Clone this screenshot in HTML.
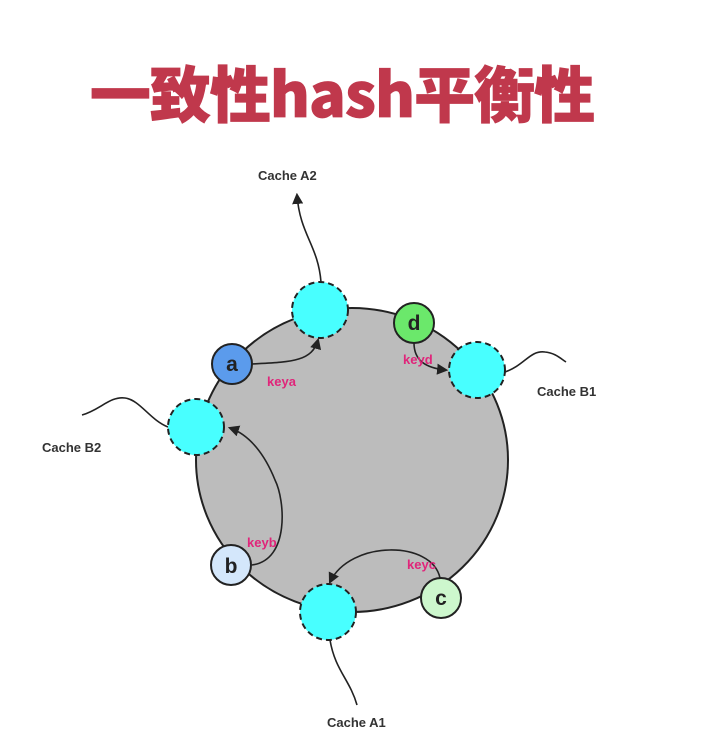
<!DOCTYPE html>
<html><head><meta charset="utf-8"><style>
body{margin:0;background:#fff;width:712px;height:746px;overflow:hidden}
</style></head><body>
<svg width="712" height="746" viewBox="0 0 712 746" xmlns="http://www.w3.org/2000/svg">
<defs><marker id="ar" viewBox="0 0 10 10" refX="8" refY="5" markerWidth="7" markerHeight="7" orient="auto-start-reverse"><path d="M0,0 L10,5 L0,10 z" fill="#222"/></marker></defs>
<text x="342" y="117" text-anchor="middle" font-family="'Noto Sans CJK SC','Liberation Sans',sans-serif" font-weight="900" font-size="61" fill="#c0384c" letter-spacing="-1" stroke="#c0384c" stroke-width="0.8">一致性hash平衡性</text>
<ellipse cx="352" cy="460" rx="156" ry="152" fill="#bcbcbc" stroke="#222" stroke-width="2"/>
<g fill="none" stroke="#222" stroke-width="1.6">
<path d="M321,282 C318,245 300,235 297,195" marker-end="url(#ar)"/>
<path d="M505,372 C525,365 530,350 545,352 C555,353 560,358 566,362"/>
<path d="M168,427 C150,420 140,400 125,398 C110,396 100,410 82,415"/>
<path d="M330,640 C335,670 350,680 357,705"/>
<path d="M252,364 C290,362 312,362 318,340" marker-end="url(#ar)"/>
<path d="M252,565 C290,560 285,500 275,480 C265,455 250,435 230,428" marker-end="url(#ar)"/>
<path d="M440,578 C432,540 350,540 330,582" marker-end="url(#ar)"/>
<path d="M414,343 C414,360 425,368 446,370" marker-end="url(#ar)"/>
</g>
<g fill="#48ffff" stroke="#222" stroke-width="2" stroke-dasharray="6,4">
<circle cx="320" cy="310" r="28"/><circle cx="477" cy="370" r="28"/>
<circle cx="196" cy="427" r="28"/><circle cx="328" cy="612" r="28"/>
</g>
<g stroke="#222" stroke-width="2">
<circle cx="232" cy="364" r="20" fill="#5b9bec"/><circle cx="414" cy="323" r="20" fill="#6be86b"/>
<circle cx="231" cy="565" r="20" fill="#d4e7fb"/><circle cx="441" cy="598" r="20" fill="#cdf7cd"/>
</g>
<g font-family="'Liberation Sans',sans-serif" font-size="21" font-weight="bold" fill="#222" text-anchor="middle">
<text x="232" y="371">a</text><text x="414" y="330">d</text><text x="231" y="573">b</text><text x="441" y="605">c</text>
</g>
<g font-family="'Liberation Sans',sans-serif" font-size="13" font-weight="bold" fill="#e0257a">
<text x="267" y="386">keya</text><text x="403" y="364">keyd</text><text x="247" y="547">keyb</text><text x="407" y="569">keyc</text>
</g>
<g font-family="'Liberation Sans',sans-serif" font-size="13" font-weight="bold" fill="#333">
<text x="258" y="180">Cache A2</text><text x="537" y="396">Cache B1</text><text x="42" y="452">Cache B2</text><text x="327" y="727">Cache A1</text>
</g>
</svg>
</body></html>
